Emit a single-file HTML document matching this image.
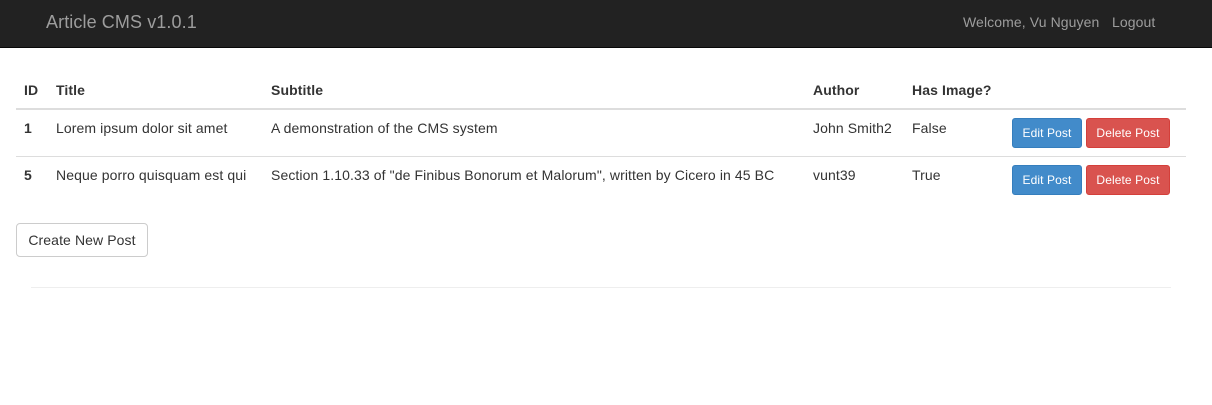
<!DOCTYPE html>
<html><head><meta charset="utf-8"><style>
*{box-sizing:border-box;margin:0;padding:0}
body{width:1212px;height:405px;background:#fff;font-family:"Liberation Sans",sans-serif;font-size:14px;color:#333;position:relative;overflow:hidden;letter-spacing:0.1px}
.nav{position:absolute;left:0;top:0;width:1212px;height:48px;background:#222;border-bottom:1px solid #080808}
.t{position:absolute;white-space:nowrap;line-height:20px}
.g{color:#9d9d9d}
.b{font-weight:bold}
.line{position:absolute;left:16px;width:1170px;background:#ddd}
.btn{position:absolute;height:30px;color:#fff;font-size:12px;line-height:28px;text-align:center;border-radius:3px;border:1px solid}
.e{background:#428bca;border-color:#357ebd;width:70px;left:1012px}
.d{background:#d9534f;border-color:#d43f3a;width:84px;left:1086px}
</style></head><body>
<div class="nav"></div>
<div class="t g" style="left:46px;top:11px;font-size:18px;line-height:22px">Article CMS v1.0.1</div>
<div class="t g" style="left:963px;top:12px">Welcome, Vu Nguyen</div>
<div class="t g" style="left:1112px;top:12px">Logout</div>

<div class="t b" style="left:24px;top:80px">ID</div>
<div class="t b" style="left:56px;top:80px">Title</div>
<div class="t b" style="left:271px;top:80px">Subtitle</div>
<div class="t b" style="left:813px;top:80px">Author</div>
<div class="t b" style="left:912px;top:80px">Has Image?</div>
<div class="line" style="top:108px;height:2px"></div>

<div class="t b" style="left:24px;top:118px">1</div>
<div class="t" style="left:56px;top:118px">Lorem ipsum dolor sit amet</div>
<div class="t" style="left:271px;top:118px">A demonstration of the CMS system</div>
<div class="t" style="left:813px;top:118px">John Smith2</div>
<div class="t" style="left:912px;top:118px">False</div>
<div class="btn e" style="top:118px">Edit Post</div>
<div class="btn d" style="top:118px">Delete Post</div>
<div class="line" style="top:156px;height:1px"></div>

<div class="t b" style="left:24px;top:165px">5</div>
<div class="t" style="left:56px;top:165px">Neque porro quisquam est qui</div>
<div class="t" style="left:271px;top:165px">Section 1.10.33 of "de Finibus Bonorum et Malorum", written by Cicero in 45 BC</div>
<div class="t" style="left:813px;top:165px">vunt39</div>
<div class="t" style="left:912px;top:165px">True</div>
<div class="btn e" style="top:165px">Edit Post</div>
<div class="btn d" style="top:165px">Delete Post</div>

<div style="position:absolute;left:16px;top:223px;width:132px;height:34px;border:1px solid #ccc;border-radius:4px;line-height:32px;text-align:center;color:#333">Create New Post</div>
<div style="position:absolute;left:31px;top:287px;width:1140px;height:1px;background:#eee"></div>
</body></html>
